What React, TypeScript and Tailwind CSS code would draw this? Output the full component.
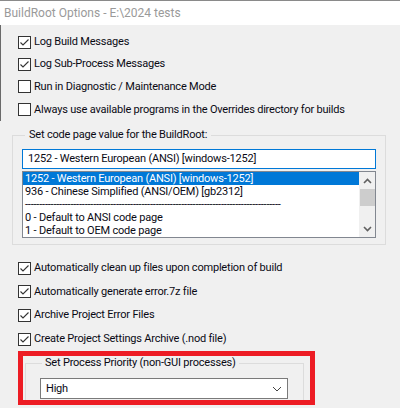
import React from 'react'

const font = { fontFamily: 'Roboto, "Noto Sans", sans-serif' }

function CheckBox({ checked }: { checked: boolean }) {
  return (
    <span className="flex h-[13px] w-[13px] shrink-0 items-center justify-center border border-[#333333] bg-white">
      {checked && (
        <svg width="11" height="11" viewBox="0 0 11 11">
          <path d="M1.5 5.5 L4 8 L9.5 2.5" fill="none" stroke="#333333" strokeWidth="1.1" />
        </svg>
      )}
    </span>
  )
}

function CheckRow({ label, checked, h = 'h-[22px]' }: { label: string; checked: boolean; h?: string }) {
  return (
    <div className={`flex ${h} items-center gap-[3px] whitespace-nowrap`}>
      <CheckBox checked={checked} />
      <span>{label}</span>
    </div>
  )
}

const codePages = [
  '1252 - Western European (ANSI) [windows-1252]',
  '936 - Chinese Simplified (ANSI/OEM) [gb2312]',
  '------------------------------------------------------------------------------------------',
  '0 - Default to ANSI code page',
  '1 - Default to OEM code page',
]

export default function App() {
  return (
    <div
      className="h-[408px] w-[400px] overflow-hidden bg-[#f0f0f0] text-[11px] leading-[14px] tracking-[-0.2px] text-[#0a0a14]"
      style={font}
    >
      {/* title bar */}
      <div className="flex h-[25px] items-center border-t border-[#8a8a8a] bg-white pl-[4px] text-[12px] tracking-normal text-[#9a9a9a]">
        BuildRoot Options - E:\2024 tests
      </div>

      <div className="flex flex-col border-l border-[#6a6a6a] pl-[17px] pt-[6px]">
        <CheckRow label="Log Build Messages" checked />
        <CheckRow label="Log Sub-Process Messages" checked />
        <CheckRow label="Run in Diagnostic / Maintenance Mode" checked={false} h="h-[23px]" />
        <CheckRow label="Always use available programs in the Overrides directory for builds" checked={false} h="h-[23px]" />
      </div>

      {/* code page group */}
      <div className="ml-[12px] mt-[7px] w-[374px]">
        <fieldset className="h-[117px] border border-[#dcdcdc] px-[9px] pt-[7px]">
          <legend className="ml-[3px] px-[4px]">Set code page value for the BuildRoot:</legend>
          <div className="flex h-[20px] items-center border border-[#0078d7] bg-white pl-[5px] whitespace-nowrap">
            1252 - Western European (ANSI) [windows-1252]
          </div>
          <div className="mt-[2px] flex h-[67px] border border-[#828790] bg-white">
            <div className="flex flex-1 flex-col overflow-hidden leading-[12px] whitespace-nowrap">
              {codePages.map((c, i) => (
                <div
                  key={i}
                  className={`flex h-[13px] items-center pl-[2px] ${i === 0 ? 'bg-[#0078d7] text-white' : ''}`}
                >
                  {c}
                </div>
              ))}
            </div>
            <div className="flex w-[16px] flex-col items-center bg-[#f0f0f0]">
              <div className="flex h-[17px] items-center justify-center">
                <svg width="9" height="6" viewBox="0 0 9 6">
                  <path d="M1 5 L4.5 1.5 L8 5" fill="none" stroke="#606060" strokeWidth="1.6" />
                </svg>
              </div>
              <div className="h-[17px] w-[15px] bg-[#cdcdcd]" />
              <div className="flex-1" />
              <div className="flex h-[17px] items-center justify-center">
                <svg width="9" height="6" viewBox="0 0 9 6">
                  <path d="M1 1 L4.5 4.5 L8 1" fill="none" stroke="#606060" strokeWidth="1.6" />
                </svg>
              </div>
            </div>
          </div>
        </fieldset>
      </div>

      <div className="flex flex-col pl-[18px] pt-[11px]">
        <CheckRow label="Automatically clean up files upon completion of build" checked h="h-[24px]" />
        <CheckRow label="Automatically generate error.7z file" checked h="h-[23px]" />
        <CheckRow label="Archive Project Error Files" checked h="h-[24px]" />
        <CheckRow label="Create Project Settings Archive (.nod file)" checked h="h-[24px]" />
      </div>

      {/* highlighted priority group */}
      <div className="ml-[18px] h-[54px] w-[297px] overflow-hidden border-[5px] border-[#ed1c24] pl-[2px]">
        <fieldset className="h-[60px] w-[279px] border border-[#dcdcdc] pl-[14px]">
          <legend className="ml-[2px] px-[3px]">Set Process Priority (non-GUI processes)</legend>
          <div className="mt-[8px] flex h-[21px] w-[248px] items-center justify-between border border-[#7a7a7a] bg-white pl-[5px] pr-[5px]">
            <span>High</span>
            <svg width="10" height="6" viewBox="0 0 10 6">
              <path d="M1 1 L5 5 L9 1" fill="none" stroke="#444444" strokeWidth="1" />
            </svg>
          </div>
        </fieldset>
      </div>
    </div>
  )
}
